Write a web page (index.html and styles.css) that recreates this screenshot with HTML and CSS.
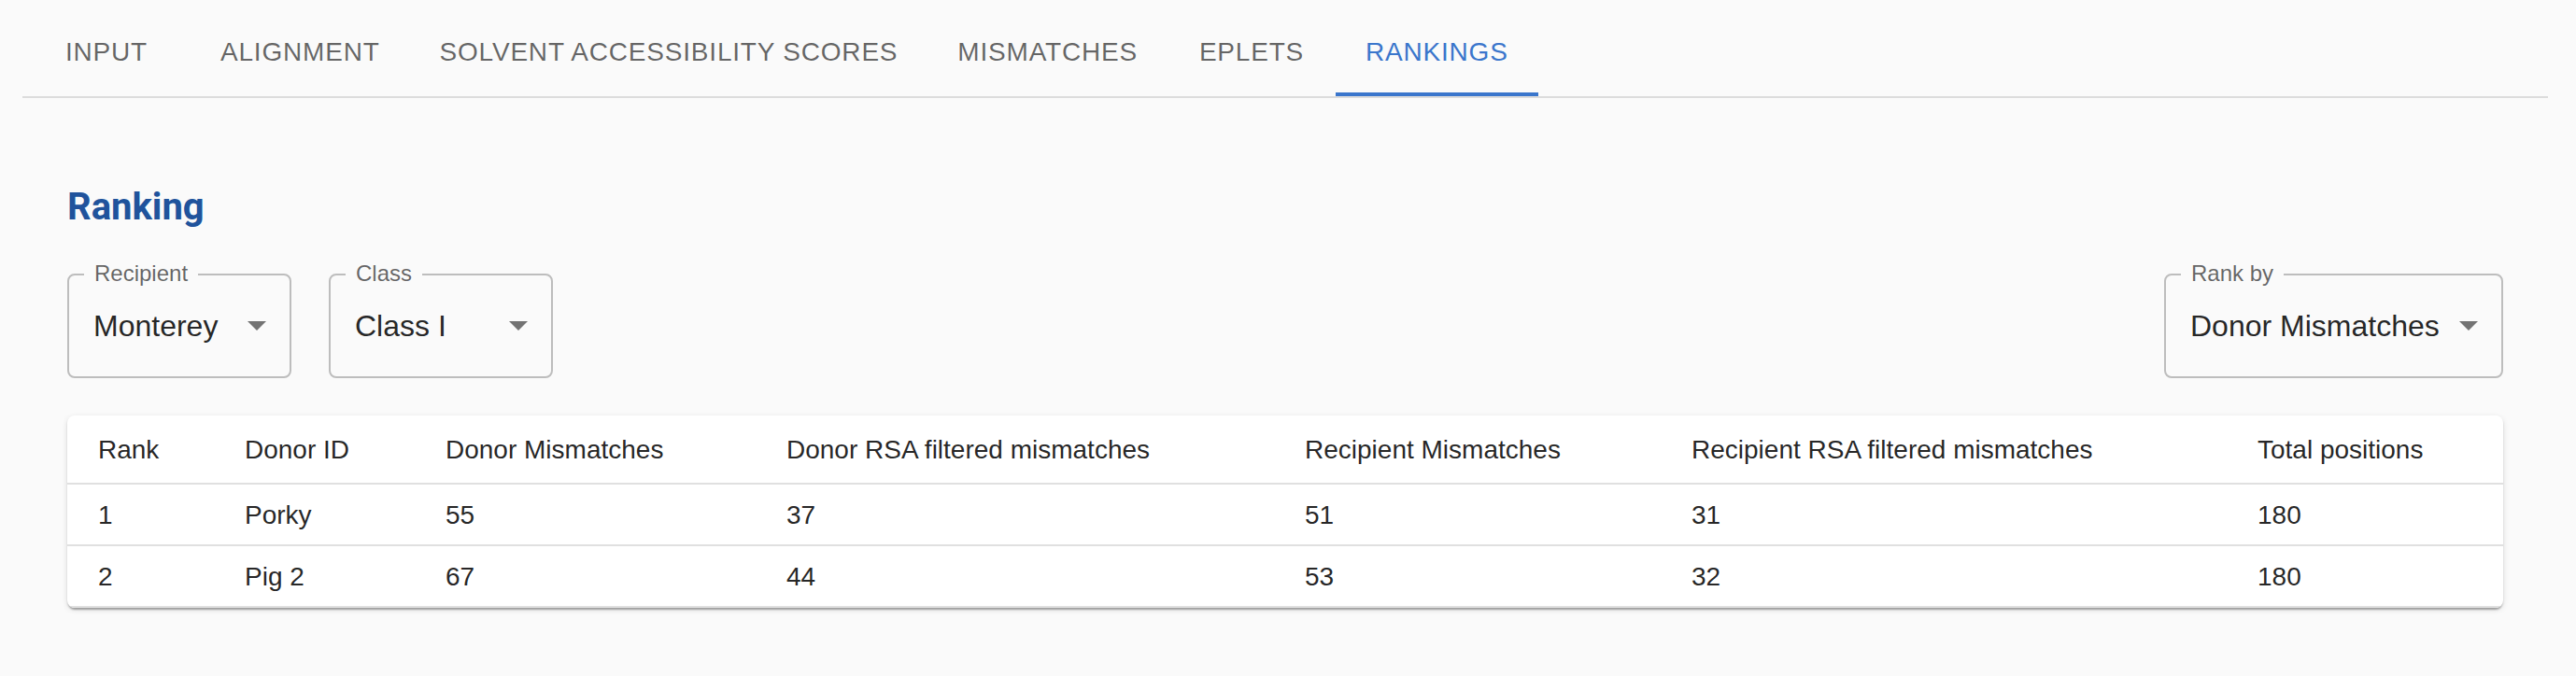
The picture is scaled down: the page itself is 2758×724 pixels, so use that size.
FILE: index.html
```html
<!DOCTYPE html>
<html>
<head>
<meta charset="utf-8">
<link rel="stylesheet" href="styles.css">
</head>
<body>
<nav class="tabs">
  <div class="tab">Input</div>
  <div class="tab">Alignment</div>
  <div class="tab">Solvent Accessibility Scores</div>
  <div class="tab">Mismatches</div>
  <div class="tab">Eplets</div>
  <div class="tab active">Rankings</div>
</nav>
<main class="content">
  <h2 class="title">Ranking</h2>
  <div class="controls">
    <div class="group">
      <div class="select">
        <span class="label">Recipient</span>
        <span class="value">Monterey</span>
        <svg class="arrow" viewBox="0 0 24 24"><path d="M7 10l5 5 5-5z"/></svg>
      </div>
      <div class="select">
        <span class="label">Class</span>
        <span class="value">Class I</span>
        <svg class="arrow" viewBox="0 0 24 24"><path d="M7 10l5 5 5-5z"/></svg>
      </div>
    </div>
    <div class="select wide">
      <span class="label">Rank by</span>
      <span class="value">Donor Mismatches</span>
      <svg class="arrow" viewBox="0 0 24 24"><path d="M7 10l5 5 5-5z"/></svg>
    </div>
  </div>
  <div class="card">
    <table class="table">
      <colgroup>
        <col class="c1"><col class="c2"><col class="c3"><col class="c4"><col class="c5"><col class="c6"><col class="c7">
      </colgroup>
      <thead>
        <tr>
          <th>Rank</th><th>Donor ID</th><th>Donor Mismatches</th><th>Donor RSA filtered mismatches</th><th>Recipient Mismatches</th><th>Recipient RSA filtered mismatches</th><th>Total positions</th>
        </tr>
      </thead>
      <tbody>
        <tr><td>1</td><td>Porky</td><td>55</td><td>37</td><td>51</td><td>31</td><td>180</td></tr>
        <tr><td>2</td><td>Pig 2</td><td>67</td><td>44</td><td>53</td><td>32</td><td>180</td></tr>
      </tbody>
    </table>
  </div>
</main>
</body>
</html>
```
FILE: styles.css
```css
* { box-sizing: border-box; }
html, body {
  margin: 0;
  background: #fafafa;
  font-family: "Liberation Sans", Arial, sans-serif;
  color: rgba(0,0,0,0.87);
}
.tabs {
  display: flex;
  margin: 7px 30px 0 24px;
  border-bottom: 2px solid #dcdcdc;
}
.tab {
  position: relative;
  height: 96px;
  min-width: 180px;
  padding: 0 32px;
  display: flex;
  align-items: center;
  justify-content: center;
  font-size: 28px;
  line-height: 35px;
  letter-spacing: 0.8px;
  text-transform: uppercase;
  color: rgba(0,0,0,0.6);
  white-space: nowrap;
}
.tab.active { color: #3a76cc; }
.tab.active::after {
  content: "";
  position: absolute;
  left: 0; right: 0; bottom: 0;
  height: 4px;
  background: #3a76cc;
}
.content {
  padding: 85px 78px 40px 72px;
}
.title {
  margin: 0;
  font-family: Roboto, "Liberation Sans", sans-serif;
  font-weight: 700;
  font-size: 40px;
  line-height: 64px;
  color: #20539c;
}
.controls {
  margin-top: 39px;
  display: flex;
  justify-content: space-between;
  align-items: flex-start;
}
.group { display: flex; gap: 40px; }
.select {
  position: relative;
  min-width: 240px;
  height: 112px;
  border: 2px solid #bdbdbd;
  border-radius: 8px;
  padding: 31px 64px 31px 26px;
  font-size: 32px;
  line-height: 46px;
  white-space: nowrap;
}
.select.wide { min-width: 363px; }
.value { color: rgba(0,0,0,0.87); }
.label {
  position: absolute;
  top: -14px;
  left: 16px;
  padding: 0 11px;
  background: #fafafa;
  font-size: 24px;
  line-height: 24px;
  color: rgba(0,0,0,0.6);
}
.arrow {
  position: absolute;
  right: 11px;
  top: calc(50% - 25px);
  width: 48px;
  height: 48px;
  fill: rgba(0,0,0,0.54);
}
.card {
  margin-top: 40px;
  background: #fff;
  border-radius: 8px;
  overflow: hidden;
  box-shadow: 0 4px 2px -2px rgba(0,0,0,0.2), 0 2px 2px 0 rgba(0,0,0,0.14), 0 2px 6px 0 rgba(0,0,0,0.12);
}
.table {
  width: 100%;
  border-collapse: collapse;
  table-layout: fixed;
  font-size: 28px;
}
.c1 { width: 157px; }
.c2 { width: 215px; }
.c3 { width: 365px; }
.c4 { width: 555px; }
.c5 { width: 414px; }
.c6 { width: 606px; }
.c7 { width: 296px; }
.table th, .table td {
  text-align: left;
  padding: 13px 32px 11px 33px;
  border-bottom: 2px solid #e0e0e0;
  color: rgba(0,0,0,0.87);
  white-space: nowrap;
}
.table th { font-weight: 400; line-height: 48px; }
.table td { line-height: 40px; }
```
